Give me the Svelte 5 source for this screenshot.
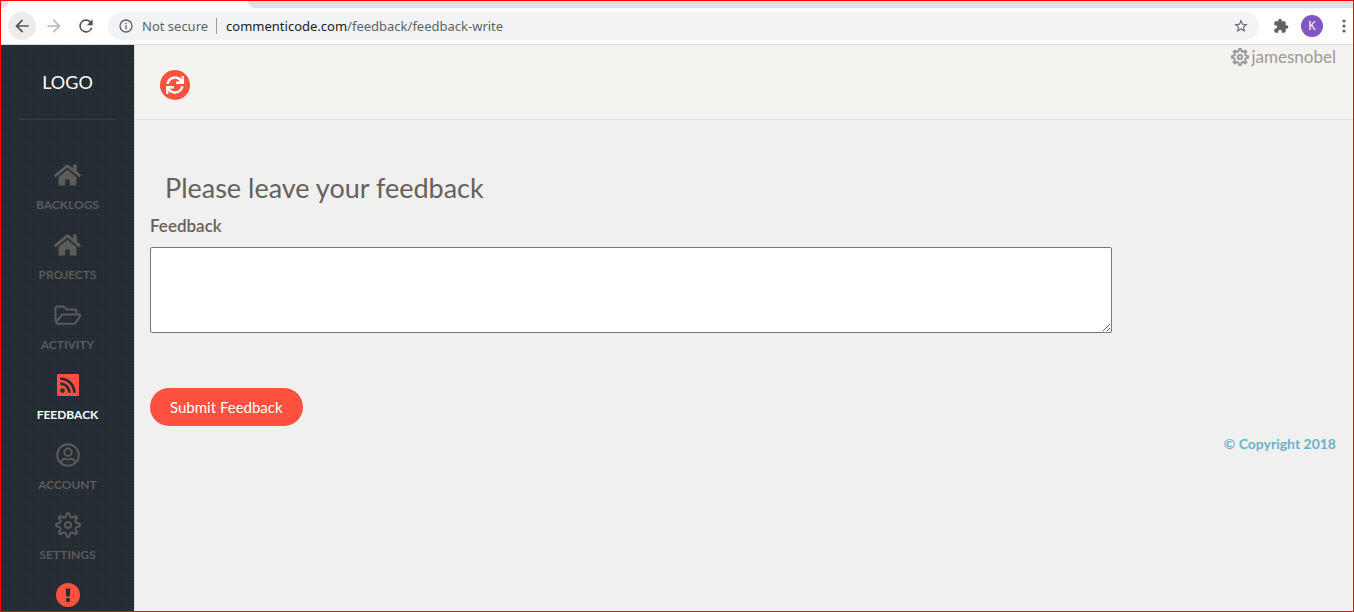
<script>
  const items = [
    { label: 'Backlogs', icon: 'home' },
    { label: 'Projects', icon: 'home' },
    { label: 'Activity', icon: 'folder' },
    { label: 'Feedback', icon: 'rss', active: true },
    { label: 'Account', icon: 'user' },
    { label: 'Settings', icon: 'gear' }
  ];
  let feedback = $state('');

  // Eight narrow teeth joined by scooped valleys, centred on 13,13.
  const at = (r, a) => `${(13 + r * Math.cos(a)).toFixed(2)} ${(13 + r * Math.sin(a)).toFixed(2)}`;
  const gearPath = Array.from({ length: 8 }, (_, k) => {
    const a = (k * Math.PI) / 4;
    const next = a + Math.PI / 4;
    return `${k ? 'L' : 'M'}${at(11.8, a - 0.1)}L${at(11.8, a + 0.1)}C${at(7.2, a + 0.26)} ${at(7.2, next - 0.26)} ${at(11.8, next - 0.1)}`;
  }).join('') + 'Z';
</script>

{#snippet gear()}
  <svg class="gear" viewBox="0 0 26 26" aria-hidden="true">
    <path d={gearPath} />
    <circle cx="13" cy="13" r="3" />
  </svg>
{/snippet}

<div class="window">
  <div class="tabs"><span class="tab-edge"></span><span class="tab-rest"></span></div>
  <div class="toolbar">
    <button class="tool back" aria-label="Back">
      <svg viewBox="0 0 24 24"><path d="M20 11H7.83l5.59-5.59L12 4l-8 8 8 8 1.41-1.41L7.83 13H20z" /></svg>
    </button>
    <button class="tool forward" aria-label="Forward">
      <svg viewBox="0 0 24 24"><path d="M12 4l-1.41 1.41L16.17 11H4v2h12.17l-5.58 5.59L12 20l8-8z" /></svg>
    </button>
    <button class="tool" aria-label="Reload">
      <svg viewBox="0 0 24 24"><path d="M17.65 6.35A8 8 0 1 0 19.73 14h-2.08A6 6 0 1 1 12 6c1.66 0 3.14.69 4.22 1.78L13 11h7V4z" /></svg>
    </button>
    <div class="address">
      <svg class="info" viewBox="0 0 24 24"><path d="M11 7h2v2h-2zm0 4h2v6h-2zm1-9a10 10 0 1 0 0 20 10 10 0 0 0 0-20zm0 18a8 8 0 1 1 0-16 8 8 0 0 1 0 16z" /></svg>
      <span class="insecure">Not secure</span>
      <span class="url"><b>commenticode.com</b>/feedback/feedback-write</span>
      <button class="star" aria-label="Bookmark">
        <svg viewBox="0 0 24 24"><path d="M22 9.24l-7.19-.62L12 2 9.19 8.63 2 9.24l5.46 4.73L5.82 21 12 17.27 18.18 21l-1.63-7.03zM12 15.4l-3.76 2.27 1-4.28-3.32-2.88 4.38-.38L12 6.1l1.71 4.04 4.38.38-3.32 2.88 1 4.28z" /></svg>
      </button>
    </div>
    <button class="extension" aria-label="Extensions">
      <svg viewBox="0 0 24 24"><path d="M20.5 11H19V7c0-1.1-.9-2-2-2h-4V3.5a2.5 2.5 0 0 0-5 0V5H4c-1.1 0-2 .9-2 2v3.8h1.5a2.7 2.7 0 0 1 0 5.4H2V20c0 1.1.9 2 2 2h3.8v-1.5a2.7 2.7 0 0 1 5.4 0V22H17c1.1 0 2-.9 2-2v-4h1.5a2.5 2.5 0 0 0 0-5z" /></svg>
    </button>
    <button class="profile">K</button>
    <button class="menu" aria-label="Menu">
      <svg viewBox="0 0 4 16"><circle cx="2" cy="3" r="1.6" /><circle cx="2" cy="8" r="1.6" /><circle cx="2" cy="13" r="1.6" /></svg>
    </button>
  </div>

  <div class="page">
    <aside>
      <a class="logo" href="/">LOGO</a>
      <nav>
        {#each items as item}
          <a class="item" class:active={item.active} href="/{item.label.toLowerCase()}">
            <span class="icon">
              {#if item.icon === 'home'}
                <svg class="home" viewBox="0 0 576 512"><path d="M280.37 148.26L96 300.11V464a16 16 0 0 0 16 16l112.06-.29a16 16 0 0 0 15.92-16V368a16 16 0 0 1 16-16h64a16 16 0 0 1 16 16v95.64a16 16 0 0 0 16 16.05L464 480a16 16 0 0 0 16-16V300L295.67 148.26a12.19 12.19 0 0 0-15.3 0zM571.6 251.47L488 182.56V44.05a12 12 0 0 0-12-12h-56a12 12 0 0 0-12 12v72.61L318.47 43a48 48 0 0 0-61 0L4.34 251.47a12 12 0 0 0-1.6 16.9l25.5 31A12 12 0 0 0 45.15 301l235.22-193.74a12.19 12.19 0 0 1 15.3 0L530.9 301a12 12 0 0 0 16.9-1.6l25.5-31a12 12 0 0 0-1.7-16.93z" /></svg>
              {:else if item.icon === 'folder'}
                <svg class="line" viewBox="0 0 28 24"><path d="M1.500 18.500V5.500q0-2 2-2h6l3 3h8q2 0 2 2v3M2 19.500q.5 1.200 1.500 1.200h16.500q1.200 0 1.800-1l4.200-6.600q.8-1.500-.9-1.500H9q-1.200 0-1.800 1L2 19.500" /></svg>
              {:else if item.icon === 'rss'}
                <svg class="rss" viewBox="0 32 448 448"><path d="M416 32H32C14 32 0 46 0 64v384c0 18 14 32 32 32h384c18 0 32-14 32-32V64c0-18-14-32-32-32zM112 416c-26.510 0-48-21.490-48-48s21.490-48 48-48 48 21.490 48 48-21.490 48-48 48zm157.533 0h-34.335c-6.011 0-11.051-4.636-11.442-10.634-5.214-80.050-69.243-143.920-149.123-149.123-5.997-.390-10.633-5.431-10.633-11.441v-34.335c0-6.535 5.468-11.777 11.994-11.425 110.546 5.974 198.997 94.536 204.964 204.964.352 6.526-4.890 11.994-11.425 11.994zm103.027 0h-34.334c-6.161 0-11.175-4.882-11.427-11.038-5.598-136.535-115.204-246.161-251.760-251.760C68.882 152.949 64 147.935 64 141.774V107.440c0-6.454 5.338-11.664 11.787-11.432 167.830 6.025 302.210 141.191 308.205 308.205.232 6.449-4.978 11.787-11.432 11.787z" /></svg>
              {:else if item.icon === 'user'}
                <svg class="line user" viewBox="0 0 24 24"><circle cx="12" cy="12" r="10.800" /><circle cx="12" cy="9.300" r="3.700" /><path d="M4.800 19.800q1-4 4.400-4 2.800 1.200 5.600 0 3.400 0 4.400 4" /></svg>
              {:else}
                {@render gear()}
              {/if}
            </span>
            {item.label}
          </a>
        {/each}
        <a class="item alert" href="/alerts" aria-label="Alerts">
          <span class="icon">
            <svg class="exclaim" viewBox="0 0 24 24"><circle cx="12" cy="12" r="12" /><path d="M9.700 5.500h4.600l-.5 8h-3.600z" /><circle class="dot" cx="12" cy="17" r="2.200" /></svg>
          </span>
        </a>
      </nav>
    </aside>

    <main>
      <header>
        <button class="refresh" aria-label="Refresh">
          <svg viewBox="0 0 512 512"><path d="M440.65 12.57l4 82.77A247.16 247.16 0 0 0 255.83 8C134.73 8 33.91 94.92 12.29 209.82A12 12 0 0 0 24.09 224h49.05a12 12 0 0 0 11.67-9.26 175.91 175.91 0 0 1 317-56.94l-101.46-4.86a12 12 0 0 0-12.57 12v47.41a12 12 0 0 0 12 12H500a12 12 0 0 0 12-12V12a12 12 0 0 0-12-12h-47.37a12 12 0 0 0-11.98 12.57zM255.83 432a175.61 175.61 0 0 1-146-77.8l101.8 4.87a12 12 0 0 0 12.57-12v-47.4a12 12 0 0 0-12-12H12a12 12 0 0 0-12 12V500a12 12 0 0 0 12 12h47.35a12 12 0 0 0 12-12.6l-4.15-82.57A247.17 247.17 0 0 0 255.83 504c121.11 0 221.93-86.92 243.55-201.82a12 12 0 0 0-11.8-14.18h-49.05a12 12 0 0 0-11.67 9.26A175.86 175.86 0 0 1 255.83 432z" /></svg>
        </button>
        <a class="account" href="/account">{@render gear()}jamesnobel</a>
      </header>
      <form onsubmit={(e) => e.preventDefault()}>
        <h1>Please leave your feedback</h1>
        <label for="feedback">Feedback</label>
        <textarea id="feedback" bind:value={feedback}></textarea>
        <button class="submit">Submit Feedback</button>
      </form>
      <footer>© Copyright 2018</footer>
    </main>
  </div>
</div>

<style>
  :global(body) { margin: 0; }
  .window {
    box-sizing: border-box;
    height: 100vh;
    overflow: hidden;
    display: flex;
    flex-direction: column;
    border: 1px solid #f00;
    background: #f0f0f0;
    color: #66615b;
    font-family: Lato, sans-serif;
  }
  button { border: 0; padding: 0; background: none; color: inherit; font: inherit; cursor: pointer; }
  a { color: inherit; text-decoration: none; }
  svg { display: block; flex: none; fill: currentColor; }

  .tabs { display: flex; justify-content: space-between; height: 7px; flex: none; background: #fff; }
  .tab-edge { width: 7px; background: #dee1e6; border-bottom-right-radius: 7px; }
  .tab-rest { width: calc(100% - 247px); background: #dee1e6; border-bottom-left-radius: 7px; }
  .toolbar {
    display: flex;
    align-items: center;
    flex: none;
    height: 36px;
    padding: 0 7px;
    background: #fff;
    border-bottom: 1px solid #d5d8dc;
    color: #5f6368;
    font: 13px/20px "Noto Sans", sans-serif;
  }
  .tool { display: grid; place-items: center; width: 28px; height: 28px; margin-right: 4px; border-radius: 50%; color: #505357; }
  .tool svg { width: 20px; height: 20px; }
  .back { background: #ececec; }
  .forward { color: #b9bbbe; }
  .address {
    display: flex;
    align-items: center;
    flex: 1;
    min-width: 0;
    height: 28px;
    margin-left: 4px;
    padding: 0 10px;
    border-radius: 14px;
    background: #f1f3f4;
  }
  .info { width: 16px; height: 16px; margin-right: 8px; }
  .insecure { padding-right: 8px; border-right: 1px solid #9a9ea2; line-height: 16px; }
  .url { flex: 1; padding-left: 9px; }
  .url b { color: #202124; font-weight: 400; }
  .star svg, .extension svg { width: 16px; height: 16px; }
  .extension { margin: 0 12px 0 14px; }
  .profile { width: 22px; height: 22px; border-radius: 50%; background: #7e57c2; color: #fff; font-size: 12px; }
  .menu { margin-left: 19px; }
  .menu svg { width: 4px; height: 16px; }

  .page { display: flex; flex: 1; min-height: 0; }
  aside {
    flex: none;
    box-sizing: border-box;
    width: 133px;
    padding: 0 18px;
    overflow: hidden;
    background-color: #262d34;
    background-image:
      linear-gradient(45deg, #20272d 25%, transparent 25% 75%, #20272d 75%),
      linear-gradient(135deg, #2a343d 25%, transparent 25% 75%, #2a343d 75%);
    background-size: 4px 4px, 3px 3px;
    color: #5d5b58;
  }
  .logo {
    display: block;
    padding: 24px 0;
    border-bottom: 1px solid #3c3f3f;
    color: #fff;
    font-size: 18px;
    line-height: 26px;
    text-align: center;
  }
  nav { padding-top: 40px; }
  .item {
    display: flex;
    flex-direction: column;
    align-items: center;
    height: 70px;
    font-size: 12px;
    font-weight: 700;
    line-height: 30px;
    text-transform: uppercase;
  }
  .icon { display: grid; place-items: center; height: 30px; }
  .active { color: #fff; }
  .active .icon { color: #ff5040; }
  .home { width: 27px; height: 24px; }
  .rss { width: 22px; height: 22px; }
  .line { width: 28px; height: 24px; fill: none; stroke: currentColor; stroke-width: 2; }
  .user { width: 24px; }
  .gear { width: 26px; height: 26px; fill: none; stroke: currentColor; stroke-width: 2; stroke-linejoin: round; }
  .exclaim { width: 24px; height: 24px; color: #ff5040; }
  .exclaim path, .exclaim .dot { fill: #252d34; }

  main { flex: 1; min-width: 0; border-left: 1px solid #dcdcda; }
  header {
    display: flex;
    justify-content: space-between;
    align-items: flex-start;
    box-sizing: border-box;
    height: 75px;
    padding: 0 17px 0 25px;
    background: #f4f3ef;
    border-bottom: 1px solid #dddddb;
  }
  .refresh { display: grid; place-items: center; width: 30px; height: 30px; margin-top: 25px; border-radius: 50%; background: #ff5040; color: #fff; }
  .refresh svg { width: 18px; height: 18px; }
  .account { display: flex; align-items: center; gap: 3px; color: #9a9a9a; font-size: 17px; line-height: 24px; }
  .account .gear { width: 18px; height: 18px; stroke-width: 3; }

  form { padding: 50px 15px 0; }
  h1 { margin: 0 15px 4px; font-size: 27px; font-weight: 400; line-height: 36px; }
  label { display: block; margin-bottom: 5px; font-size: 17px; font-weight: 600; line-height: 32px; }
  textarea {
    display: block;
    box-sizing: border-box;
    width: 81%;
    height: 86px;
    margin: 0 0 55px;
    border: 1px solid #767676;
    border-radius: 2px;
    background: #fff;
    font: inherit;
  }
  .submit { height: 38px; padding: 0 20px; border-radius: 19px; background: #ff5040; color: #fff; font-size: 15px; line-height: 36px; }
  footer { padding: 8px 17px; color: #68b3c8; font-size: 14px; font-weight: 700; line-height: 20px; text-align: right; }
</style>
